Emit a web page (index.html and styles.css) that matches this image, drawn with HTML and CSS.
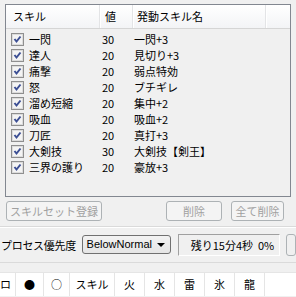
FILE: index.html
```html
<!DOCTYPE html>
<html lang="ja">

<head>
    <meta charset="UTF-8">
    <meta name="viewport" content="width=device-width, initial-scale=1.0">
    <title>スキルセット</title>
    <link rel="stylesheet" href="styles.css">
</head>

<body>
    <div class="list">
        <div class="list-head">
            <div class="col col-name">スキル</div>
            <div class="col col-val">値</div>
            <div class="col col-skill">発動スキル名</div>
            <div class="col col-rest"></div>
        </div>
        <div class="list-body">
            <div class="row"><span class="check"></span><span class="c-name">一閃</span><span class="c-val">30</span><span class="c-skill">一閃+3</span></div>
            <div class="row"><span class="check"></span><span class="c-name">達人</span><span class="c-val">20</span><span class="c-skill">見切り+3</span></div>
            <div class="row"><span class="check"></span><span class="c-name">痛撃</span><span class="c-val">20</span><span class="c-skill">弱点特効</span></div>
            <div class="row"><span class="check"></span><span class="c-name">怒</span><span class="c-val">20</span><span class="c-skill">ブチギレ</span></div>
            <div class="row"><span class="check"></span><span class="c-name">溜め短縮</span><span class="c-val">20</span><span class="c-skill">集中+2</span></div>
            <div class="row"><span class="check"></span><span class="c-name">吸血</span><span class="c-val">20</span><span class="c-skill">吸血+2</span></div>
            <div class="row"><span class="check"></span><span class="c-name">刀匠</span><span class="c-val">20</span><span class="c-skill">真打+3</span></div>
            <div class="row"><span class="check"></span><span class="c-name">大剣技</span><span class="c-val">30</span><span class="c-skill">大剣技【剣王】</span></div>
            <div class="row"><span class="check"></span><span class="c-name">三界の護り</span><span class="c-val">20</span><span class="c-skill">豪放+3</span></div>
        </div>
    </div>

    <div class="actions">
        <button class="btn btn-set" disabled>スキルセット登録</button>
        <div class="actions-right">
            <button class="btn btn-del" disabled>削除</button>
            <button class="btn btn-all" disabled>全て削除</button>
        </div>
    </div>

    <div class="priority">
        <span class="priority-label">プロセス優先度</span>
        <div class="combo">BelowNormal<span class="combo-arrow"></span></div>
        <div class="status">残り15分4秒&nbsp;&nbsp;0%</div>
        <div class="edge-btn"></div>
    </div>

    <div class="table-head">
        <div class="th th-lock">ロ</div>
        <div class="th th-dot">●</div>
        <div class="th th-dot">○</div>
        <div class="th th-skill">スキル</div>
        <div class="th">火</div>
        <div class="th">水</div>
        <div class="th">雷</div>
        <div class="th">氷</div>
        <div class="th">龍</div>
        <div class="th th-fill"></div>
    </div>
</body>

</html>
```

FILE: styles.css
```css
* {
    padding: 0;
    margin: 0;
    box-sizing: border-box;
}

body {
    background-color: #f0f0f0;
    color: #000;
    font-family: "Noto Sans CJK JP", "Noto Sans", sans-serif;
    font-size: 11px;
    line-height: 16px;
    width: 296px;
    height: 297px;
    overflow: hidden;
    white-space: nowrap;
}

.list {
    margin: 4px 0 0 5px;
    width: 286px;
    height: 193px;
    border: 1px solid #828790;
    background-color: #f0f0f0;
}

.list-head {
    display: flex;
    height: 24px;
    background: linear-gradient(#ffffff, #f3f4f6);
    border-bottom: 1px solid #d5d5d5;
}

.col {
    line-height: 23px;
    border-right: 1px solid #e3e4e6;
    box-shadow: 1px 0 0 #fff;
}

.col-name {
    width: 94px;
    padding-left: 7px;
}

.col-val {
    width: 33px;
    padding-left: 5px;
}

.col-skill {
    width: 133px;
    padding-left: 4px;
}

.col-rest {
    flex: 1;
    border-right: none;
    box-shadow: none;
}

.list-body {
    padding-top: 2px;
}

.row {
    display: flex;
    align-items: center;
    height: 16px;
}

.check {
    width: 13px;
    height: 13px;
    margin-left: 5px;
    border: 1px solid #8f8f8f;
    background-color: #f4f4f4;
    background-image: url("data:image/svg+xml,%3Csvg xmlns='http://www.w3.org/2000/svg' width='11' height='11'%3E%3Cpath d='M2.5 5 L4.5 7.5 L8.5 2.5' fill='none' stroke='%233c4f94' stroke-width='2'/%3E%3C/svg%3E");
    background-repeat: no-repeat;
    box-shadow: inset 0 0 0 1px #dcdcdc;
}

.c-name {
    width: 77px;
    padding-left: 5px;
}

.c-val {
    width: 31px;
    padding-left: 1px;
}

.c-skill {
    padding-left: 2px;
}

.actions {
    display: flex;
    justify-content: space-between;
    margin-top: 4px;
    padding: 0 12px 0 6px;
    height: 20px;
}

.actions-right {
    display: flex;
    gap: 9px;
}

.btn {
    font-family: inherit;
    font-size: 11px;
    height: 20px;
    padding: 0;
    color: #a0a0a0;
    background-color: #f4f4f4;
    border: 1px solid #adb2b5;
    border-radius: 3px;
}

.btn-set {
    width: 96px;
}

.btn-del {
    width: 56px;
}

.btn-all {
    width: 53px;
}

.priority {
    display: flex;
    align-items: center;
    margin-top: 5px;
    height: 37px;
    border-top: 1px solid #dadada;
    box-shadow: inset 0 1px 0 #fff;
    border-bottom: 1px solid #dadada;
}

.priority-label {
    width: 84px;
    padding-left: 1px;
    font-size: 11px;
    letter-spacing: -0.3px;
}

.combo {
    position: relative;
    width: 92px;
    height: 19px;
    line-height: 17px;
    padding-left: 4px;
    border: 1px solid #707070;
    border-radius: 3px;
    background: linear-gradient(#f2f2f2, #e5e5e5);
    font-family: "Liberation Sans", sans-serif;
    font-size: 11px;
}

.combo-arrow {
    position: absolute;
    right: 5px;
    top: 7px;
    border-left: 4px solid transparent;
    border-right: 4px solid transparent;
    border-top: 4px solid #000;
}

.status {
    width: 105px;
    height: 22px;
    line-height: 20px;
    margin-left: 7px;
    padding-right: 5px;
    text-align: right;
    border: 1px solid #a0a0a0;
    border-right-color: #fff;
    border-bottom-color: #fff;
}

.edge-btn {
    width: 10px;
    height: 22px;
    margin-left: 6px;
    border: 1px solid #adb2b5;
    border-radius: 3px;
}

.table-head {
    display: flex;
    margin-top: 9px;
    height: 24px;
    background-color: #fff;
    border-top: 1px solid #e5e5e5;
}

.th {
    width: 30px;
    text-align: center;
    line-height: 23px;
    border-right: 1px solid #e5e5e5;
}

.th-lock {
    width: 16px;
    text-align: left;
    padding-left: 0;
}

.th-dot {
    width: 28px;
}

.th-dot + .th-dot {
    width: 26px;
}

.th-skill {
    width: 45px;
}

.th-fill {
    flex: 1;
    border-right: none;
}
```
